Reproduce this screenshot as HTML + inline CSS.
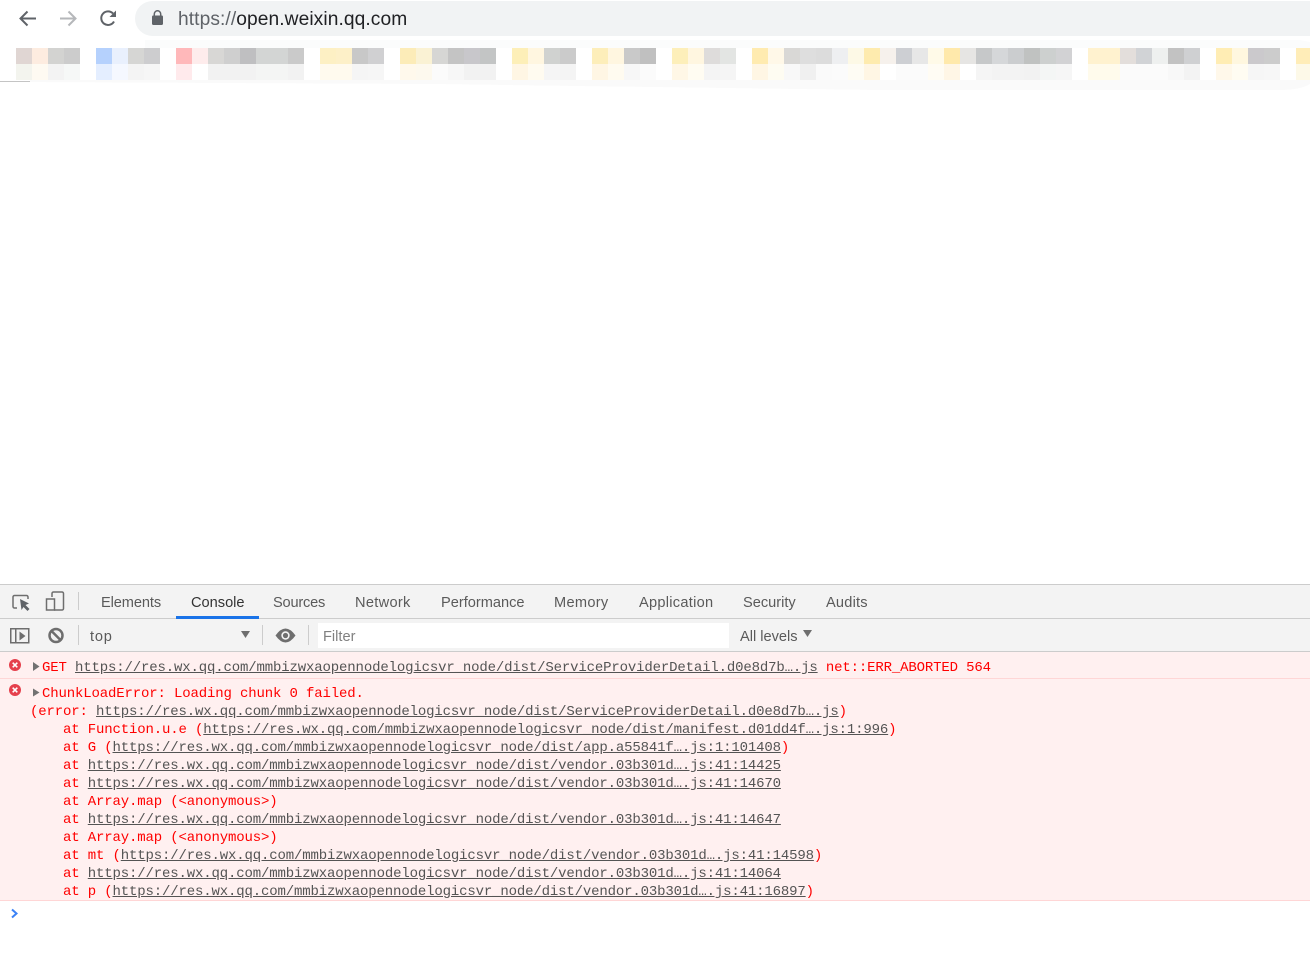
<!DOCTYPE html>
<html>
<head>
<meta charset="utf-8">
<title>DevTools</title>
<style>
html,body{margin:0;padding:0;background:#fff}
body{position:relative;width:1310px;height:966px;overflow:hidden;font-family:"Liberation Sans",sans-serif}
.abs,svg{position:absolute}
.row{position:absolute;left:16px;width:1296px;height:16px}
.row i{float:left;width:16px;height:16px}
.t{position:absolute;font-size:14.6px;line-height:20px;color:#5a5a5a;white-space:pre}
.l{position:absolute;font-family:"Liberation Mono",monospace;font-size:14px;letter-spacing:-.15px;line-height:18px;height:18px;color:#f00;white-space:pre}
.l u{color:#545454;text-decoration:underline}
</style>
</head>
<body>
<svg style="left:0;top:0" width="1310" height="95">
<path d="M145 40H1300L1310 42V48H145Z" fill="#fbfcfc"/>
<path d="M30 80H1310V84Q1300 90 1280 90H880Q640 87 440 84L30 82Z" fill="#fafafa"/>
<rect x="0" y="81" width="30" height="1" fill="#c4c4c4"/>
</svg>
<div class="abs" style="left:135px;top:1px;width:1175px;height:35px;background:#f1f3f4;border-radius:18px 0 0 18px"></div>
<svg style="left:0;top:0" width="175" height="36">
<path d="M36 18.500H21M27.500 11.500L20.500 18.500L27.500 25.500" fill="none" stroke="#5f6368" stroke-width="2"/>
<path d="M60 18.500H75M68.500 11.500L75.500 18.500L68.500 25.500" fill="none" stroke="#b5b7ba" stroke-width="2"/>
<path d="M114 21.500A6.800 6.800 0 1 1 113 13.500" fill="none" stroke="#5f6368" stroke-width="2"/>
<path d="M116 10.500V17H109.500Z" fill="#5f6368"/>
<rect x="152" y="15.500" width="11" height="9.500" rx="1.200" fill="#5f6368"/>
<path d="M154.300 16V14a3.200 3.200 0 0 1 6.400 0V16" fill="none" stroke="#5f6368" stroke-width="1.500"/>
</svg>
<div class="abs" style="left:178px;top:8px;font-size:19.2px;letter-spacing:.08px;line-height:24px;color:#202124;white-space:pre"><span style="color:#5f6368">https://</span>open.weixin.qq.com</div>

<div class="row" style="top:48px"><i style="background:#e0d6d3"></i><i style="background:#fdece0"></i><i style="background:#d3d3d1"></i><i style="background:#ccc"></i><i></i><i style="background:#b5d1fd"></i><i style="background:#e9f0fd"></i><i style="background:#d6d6d4"></i><i style="background:#cdcdcf"></i><i></i><i style="background:#ffb8ba"></i><i style="background:#feecec"></i><i style="background:#d8d7d5"></i><i style="background:#cfcfcf"></i><i style="background:#bfbfc1"></i><i style="background:#d3d5d4"></i><i style="background:#d3d5d4"></i><i style="background:#cacaca"></i><i></i><i style="background:#fdf0c4"></i><i style="background:#fdf0c8"></i><i style="background:#c8c8c8"></i><i style="background:#d0d0d2"></i><i></i><i style="background:#fcecb8"></i><i style="background:#faf2d4"></i><i style="background:#d6d6d4"></i><i style="background:#c4c4c4"></i><i style="background:#c8c7cb"></i><i style="background:#c3c5c5"></i><i></i><i style="background:#fdefb8"></i><i style="background:#fff6e0"></i><i style="background:#d0d2d0"></i><i style="background:#cbcbcb"></i><i></i><i style="background:#fdeeba"></i><i style="background:#fff6e0"></i><i style="background:#c9c9c9"></i><i style="background:#c0c0c0"></i><i></i><i style="background:#fdefba"></i><i style="background:#fff6e0"></i><i style="background:#dedcdb"></i><i style="background:#e3e5e3"></i><i></i><i style="background:#ffebb0"></i><i style="background:#fff8e8"></i><i style="background:#d9d8d6"></i><i style="background:#dedede"></i><i style="background:#dcdcdc"></i><i style="background:#eeeff1"></i><i style="background:#fdf9e6"></i><i style="background:#feebae"></i><i style="background:#f6f1ec"></i><i style="background:#cdcfd3"></i><i style="background:#e7e7e7"></i><i style="background:#fffae8"></i><i style="background:#ffe9ab"></i><i style="background:#e6e5e3"></i><i style="background:#c6c8c9"></i><i style="background:#d5d7d9"></i><i style="background:#cbcdcf"></i><i style="background:#c0c2c1"></i><i style="background:#cdd0cf"></i><i style="background:#d2d2d4"></i><i></i><i style="background:#fff2cf"></i><i style="background:#fff2cf"></i><i style="background:#e3dedb"></i><i style="background:#d1d3d6"></i><i style="background:#eef0ef"></i><i style="background:#c2c2c2"></i><i style="background:#cfd0d2"></i><i></i><i style="background:#ffedb4"></i><i style="background:#fff7df"></i><i style="background:#cbc9cc"></i><i style="background:#ccc"></i><i></i><i style="background:#ffedb8"></i></div>
<div class="row" style="top:64px"><i style="background:#f3f4ee"></i><i style="background:#fefaf2"></i><i style="background:#f3f3f3"></i><i style="background:#f6f8f7"></i><i></i><i style="background:#e4eeff"></i><i style="background:#f5f8ff"></i><i style="background:#f4f4f4"></i><i style="background:#f6f6f6"></i><i></i><i style="background:#ffeaec"></i><i></i><i style="background:#f2f2f2"></i><i style="background:#f2f2f2"></i><i style="background:#f2f2f2"></i><i style="background:#f4f5f4"></i><i style="background:#f4f5f4"></i><i style="background:#f2f2f2"></i><i></i><i style="background:#fffaee"></i><i style="background:#fffaee"></i><i style="background:#f5f5f5"></i><i style="background:#f6f6f6"></i><i></i><i style="background:#fff9ec"></i><i style="background:#fdf9ee"></i><i style="background:#fbfbfb"></i><i style="background:#f7f7f7"></i><i style="background:#f2f2f2"></i><i style="background:#f2f2f2"></i><i></i><i style="background:#fff6e4"></i><i style="background:#fffbf0"></i><i style="background:#f5f5f5"></i><i style="background:#f4f4f4"></i><i></i><i style="background:#fff6e4"></i><i style="background:#fffbf0"></i><i style="background:#f7f7f7"></i><i style="background:#fbfbfb"></i><i></i><i style="background:#fff7e6"></i><i style="background:#fffcf2"></i><i style="background:#f4f4f4"></i><i style="background:#f5f5f5"></i><i></i><i style="background:#fff6e4"></i><i style="background:#fefcf2"></i><i style="background:#f8f8f8"></i><i style="background:#f0f0f0"></i><i style="background:#fafafa"></i><i style="background:#fbfbfb"></i><i style="background:#fefcf4"></i><i style="background:#fff6e4"></i><i></i><i style="background:#fbfbfb"></i><i style="background:#fbfbfb"></i><i style="background:#fffcf4"></i><i style="background:#fff6e6"></i><i></i><i style="background:#f5f5f5"></i><i style="background:#f3f3f3"></i><i style="background:#f3f3f3"></i><i style="background:#f2f2f2"></i><i style="background:#f4f6f5"></i><i style="background:#f6f6f6"></i><i></i><i style="background:#fffbec"></i><i style="background:#fffbec"></i><i style="background:#fbfbfb"></i><i style="background:#fbfbfb"></i><i style="background:#fbfbfb"></i><i style="background:#f8f8f8"></i><i style="background:#f3f3f3"></i><i></i><i style="background:#fff8ea"></i><i style="background:#fffcf2"></i><i style="background:#f6f6f6"></i><i style="background:#f7f7f7"></i><i></i><i style="background:#fdf9e8"></i></div>

<!-- DevTools toolbars -->
<div class="abs" style="left:0;top:584px;width:1310px;height:33px;background:#f3f3f3;border-top:1px solid #ccc;border-bottom:1px solid #ccc"></div>
<div class="abs" style="left:0;top:619px;width:1310px;height:32px;background:#f3f3f3;border-bottom:1px solid #ccc"></div>
<div class="abs" style="left:176px;top:616px;width:83px;height:3px;background:#1a73e8"></div>
<div class="t" style="left:101px;top:593px;letter-spacing:-.1px">Elements</div>
<div class="t" style="left:191px;top:593px;color:#333">Console</div>
<div class="t" style="left:273px;top:593px;letter-spacing:-.2px">Sources</div>
<div class="t" style="left:355px;top:593px;letter-spacing:.3px">Network</div>
<div class="t" style="left:441px;top:593px">Performance</div>
<div class="t" style="left:554px;top:593px;letter-spacing:.3px">Memory</div>
<div class="t" style="left:639px;top:593px;letter-spacing:.27px">Application</div>
<div class="t" style="left:743px;top:593px">Security</div>
<div class="t" style="left:826px;top:593px;letter-spacing:.2px">Audits</div>
<div class="t" style="left:90px;top:627px;letter-spacing:.8px">top</div>
<div class="abs" style="left:318px;top:623px;width:411px;height:25px;background:#fff"></div>
<div class="t" style="left:323px;top:627px;color:#808080">Filter</div>
<div class="t" style="left:740px;top:627px">All levels</div>
<svg style="left:0;top:584px" width="830" height="68">
<path d="M19 11.500H14.500A1.500 1.500 0 0 0 13 13V22.500A1.500 1.500 0 0 0 14.500 24H17M19 11.500H26.500A1.500 1.500 0 0 1 28 13V15" fill="none" stroke="#6e6e6e" stroke-width="1.500"/>
<path d="M20 15L29 19.500L25.500 21L29.500 25L27.500 27L23.500 23L21.500 26Z" fill="#5f6368"/>
<path d="M52 13V9.500A1.500 1.500 0 0 1 53.500 8H62A1.500 1.500 0 0 1 63.500 9.500V24.500A1.500 1.500 0 0 1 62 26H54" fill="none" stroke="#6e6e6e" stroke-width="1.500"/>
<rect x="46.500" y="15" width="8" height="11" fill="none" stroke="#6e6e6e" stroke-width="1.500"/>
<rect x="78" y="8" width="1" height="18" fill="#ccc"/>
<rect x="10.750" y="44.750" width="18" height="14" fill="none" stroke="#6e6e6e" stroke-width="1.500"/>
<rect x="15" y="45" width="1.500" height="14" fill="#6e6e6e"/>
<path d="M19.500 47.500L25.500 52L19.500 56.500Z" fill="#6e6e6e"/>
<circle cx="56" cy="51.500" r="6.500" fill="none" stroke="#6e6e6e" stroke-width="2.500"/>
<path d="M51.300 46.800L60.700 56.200" stroke="#6e6e6e" stroke-width="2.500"/>
<rect x="78" y="41" width="1" height="20" fill="#ccc"/>
<path d="M241 47H250L245.500 54Z" fill="#6e6e6e"/>
<rect x="262" y="41" width="1" height="20" fill="#ccc"/>
<path d="M275.500 51.500Q285.500 37.500 295.500 51.500Q285.500 65.500 275.500 51.500Z" fill="#6e6e6e"/>
<circle cx="285.500" cy="51.500" r="4.200" fill="#f3f3f3"/>
<circle cx="285.500" cy="51.500" r="2.600" fill="#6e6e6e"/>
<rect x="308" y="41" width="1" height="20" fill="#ccc"/>
<path d="M803 46H812L807.500 53Z" fill="#6e6e6e"/>
</svg>

<!-- Console -->
<div class="abs" style="left:0;top:652px;width:1310px;height:26px;background:#fff0f0;border-bottom:1px solid #ffd6d6"></div>
<div class="abs" style="left:0;top:679px;width:1310px;height:221px;background:#fff0f0;border-bottom:1px solid #ffd6d6"></div>
<svg style="left:0;top:652px" width="40" height="270">
<circle cx="15" cy="13" r="6" fill="#e5404c"/>
<path d="M12.700 10.700L17.300 15.300M17.300 10.700L12.700 15.300" stroke="#fff" stroke-width="1.600"/>
<circle cx="15" cy="38" r="6" fill="#e5404c"/>
<path d="M12.700 35.700L17.300 40.300M17.300 35.700L12.700 40.300" stroke="#fff" stroke-width="1.600"/>
<path d="M33 10L39.500 14.500L33 19Z" fill="#727272"/>
<path d="M33 36.500L39.500 40.500L33 44.500Z" fill="#727272"/>
<path d="M12 257.500L16.500 261.500L12 265.500" fill="none" stroke="#3b82f6" stroke-width="2"/>
</svg>

<div class="l" style="left:42px;top:659px">GET <u>https://res.wx.qq.com/mmbizwxaopennodelogicsvr_node/dist/ServiceProviderDetail.d0e8d7b….js</u> net::ERR_ABORTED 564</div>
<div class="l" style="left:42px;top:685px">ChunkLoadError: Loading chunk 0 failed.</div>
<div class="l" style="left:30px;top:703px">(error: <u>https://res.wx.qq.com/mmbizwxaopennodelogicsvr_node/dist/ServiceProviderDetail.d0e8d7b….js</u>)</div>
<div class="l" style="left:30px;top:721px">    at Function.u.e (<u>https://res.wx.qq.com/mmbizwxaopennodelogicsvr_node/dist/manifest.d01dd4f….js:1:996</u>)</div>
<div class="l" style="left:30px;top:739px">    at G (<u>https://res.wx.qq.com/mmbizwxaopennodelogicsvr_node/dist/app.a55841f….js:1:101408</u>)</div>
<div class="l" style="left:30px;top:757px">    at <u>https://res.wx.qq.com/mmbizwxaopennodelogicsvr_node/dist/vendor.03b301d….js:41:14425</u></div>
<div class="l" style="left:30px;top:775px">    at <u>https://res.wx.qq.com/mmbizwxaopennodelogicsvr_node/dist/vendor.03b301d….js:41:14670</u></div>
<div class="l" style="left:30px;top:793px">    at Array.map (&lt;anonymous&gt;)</div>
<div class="l" style="left:30px;top:811px">    at <u>https://res.wx.qq.com/mmbizwxaopennodelogicsvr_node/dist/vendor.03b301d….js:41:14647</u></div>
<div class="l" style="left:30px;top:829px">    at Array.map (&lt;anonymous&gt;)</div>
<div class="l" style="left:30px;top:847px">    at mt (<u>https://res.wx.qq.com/mmbizwxaopennodelogicsvr_node/dist/vendor.03b301d….js:41:14598</u>)</div>
<div class="l" style="left:30px;top:865px">    at <u>https://res.wx.qq.com/mmbizwxaopennodelogicsvr_node/dist/vendor.03b301d….js:41:14064</u></div>
<div class="l" style="left:30px;top:883px">    at p (<u>https://res.wx.qq.com/mmbizwxaopennodelogicsvr_node/dist/vendor.03b301d….js:41:16897</u>)</div>
</body>
</html>
